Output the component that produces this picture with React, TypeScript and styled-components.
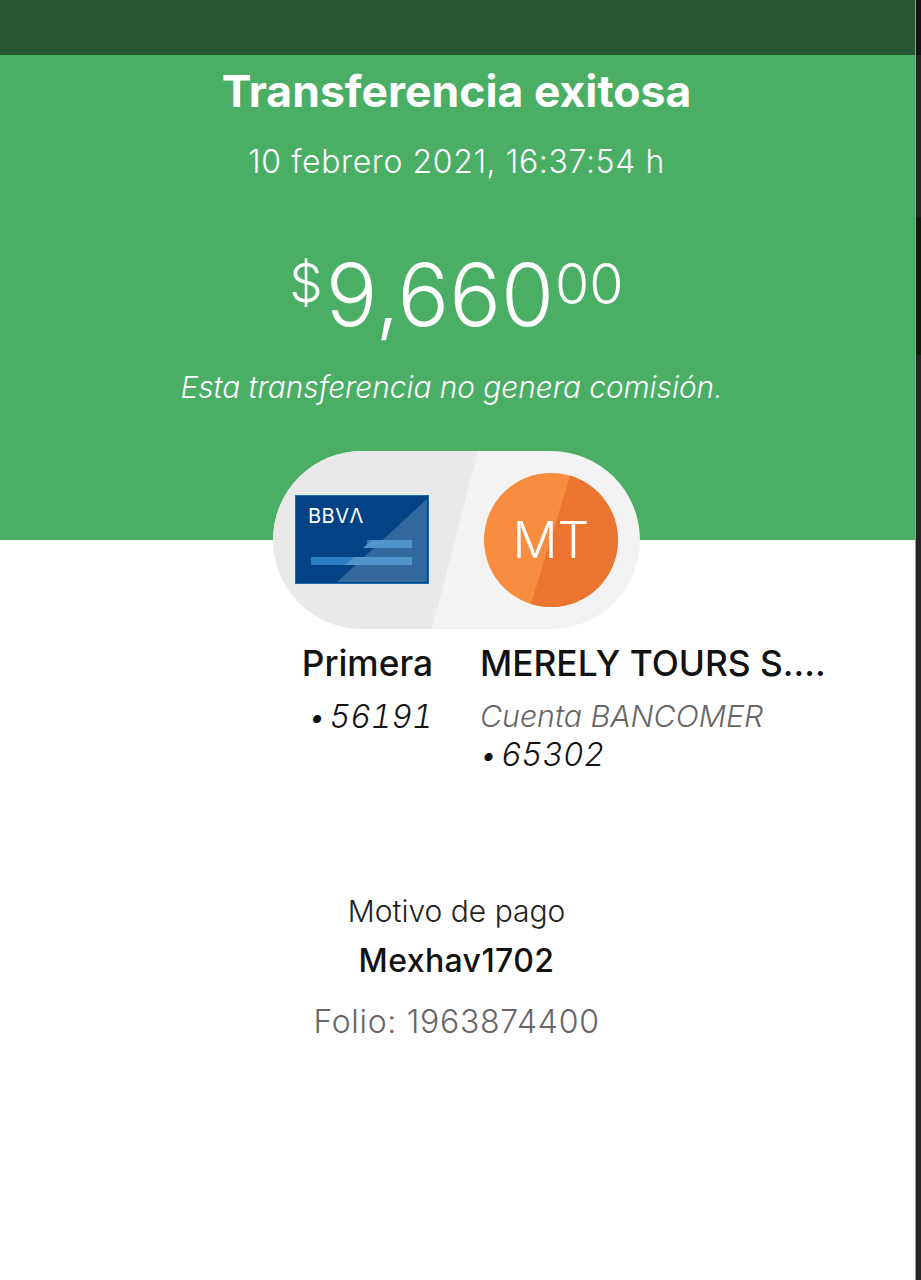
import React from "react";
import styled, { createGlobalStyle } from "styled-components";

const Global = createGlobalStyle`
  html, body { margin: 0; padding: 0; background: #fff; }
  body { font-family: Inter, "Liberation Sans", sans-serif; }
`;

const Screen = styled.div`
  display: flex;
  width: 921px;
  height: 1280px;
  overflow: hidden;
`;

const Main = styled.main`
  width: 915px;
  display: flex;
  flex-direction: column;
  background: #fff;
`;

const Strip = styled.div`
  width: 6px;
  display: flex;
  flex-direction: column;
  background: #252525;
  border-left: 1px solid #9a9a9a;
  box-sizing: border-box;
`;

const StripPart = styled.div<{ $h: number; $c: string }>`
  height: ${(p) => p.$h}px;
  background: ${(p) => p.$c};
`;

const StatusBar = styled.div`
  height: 55px;
  background: #285735;
  flex: none;
`;

const Hero = styled.section`
  height: 485px;
  flex: none;
  box-sizing: border-box;
  padding-right: 2px;
  background: #4aae65;
  color: #fff;
  display: flex;
  flex-direction: column;
  align-items: center;
`;

const Title = styled.h1`
  margin: 12px 0 0;
  font-size: 44.5px;
  line-height: 48px;
  font-weight: 700;
`;

const DateLine = styled.div`
  margin-top: 28px;
  font-size: 32px;
  line-height: 38px;
  font-weight: 300;
  letter-spacing: 0.6px;
`;

const Amount = styled.div`
  margin-top: 64px;
  display: flex;
  align-items: flex-start;
  height: 100px;
  font-weight: 300;
`;

const Currency = styled.span`
  font-size: 53px;
  line-height: 77px;
  margin-right: 3px;
`;

const Whole = styled.span`
  font-size: 86px;
  line-height: 100px;
`;

const Cents = styled.span`
  font-size: 55.5px;
  line-height: 78px;
  margin-left: 1px;
`;

const Note = styled.div`
  margin: 23px 10px 0 0;
  font-size: 29.8px;
  line-height: 38px;
  font-weight: 300;
  font-style: italic;
`;

const Pill = styled.div`
  position: relative;
  margin-top: 45px;
  width: 367px;
  height: 178px;
  flex: none;
  border-radius: 89px;
  overflow: hidden;
  background: #f3f3f3;
  display: flex;
  align-items: center;
  padding-left: 22px;
  box-sizing: border-box;
  &::before {
    content: "";
    position: absolute;
    inset: 0;
    background: #e9e9e9;
    clip-path: polygon(0 0, 205px 0, 159px 100%, 0 100%);
  }
`;

const Card = styled.svg`
  position: relative;
  display: block;
  width: 134px;
  height: 90px;
  flex: none;
`;

const Avatar = styled.div`
  position: relative;
  overflow: hidden;
  width: 134px;
  height: 134px;
  margin-left: 55px;
  flex: none;
  border-radius: 50%;
  background: #f98d3f;
  color: #fff;
  display: flex;
  align-items: center;
  justify-content: center;
  font-size: 50px;
  font-weight: 300;
  &::before {
    content: "";
    position: absolute;
    inset: 0;
    background: #ea7430;
    clip-path: polygon(87px 0, 100% 0, 100% 100%, 46px 100%);
  }
  & > span { position: relative; }
`;

const Accounts = styled.section`
  display: grid;
  grid-template-columns: 1fr 1fr;
  column-gap: 47px;
  margin-top: 102px;
  padding-right: 2px;
  color: #121212;
`;

const Account = styled.div<{ $right?: boolean }>`
  display: flex;
  flex-direction: column;
  align-items: ${(p) => (p.$right ? "flex-end" : "flex-start")};
  text-align: ${(p) => (p.$right ? "right" : "left")};
`;

const Name = styled.div`
  font-size: 35.3px;
  line-height: 44px;
  font-weight: 500;
  white-space: nowrap;
`;

const Bank = styled.div`
  margin-top: 11px;
  font-size: 30.3px;
  line-height: 38px;
  font-weight: 300;
  font-style: italic;
  color: #666;
`;

const Number = styled.div<{ $first?: boolean }>`
  margin-top: ${(p) => (p.$first ? "12px" : "1px")};
  font-size: 32px;
  line-height: 38px;
  font-weight: 300;
  font-style: italic;
  font-variant-numeric: tabular-nums;
`;

const Dot = styled.span`
  font-size: 30px;
  margin-right: 4px;
`;

const Details = styled.section`
  margin-top: 117px;
  padding-right: 2px;
  display: flex;
  flex-direction: column;
  align-items: center;
`;

const Label = styled.div`
  font-size: 30px;
  line-height: 40px;
  font-weight: 300;
  color: #222;
`;

const Value = styled.div`
  margin-top: 10px;
  font-size: 32px;
  line-height: 40px;
  font-weight: 500;
  letter-spacing: 0.4px;
  color: #121212;
`;

const Folio = styled.div`
  margin-top: 21px;
  font-size: 32px;
  line-height: 40px;
  font-weight: 300;
  letter-spacing: 0.7px;
  color: #666;
`;

export default function App() {
  return (
    <Screen>
      <Global />
      <Main>
        <StatusBar />
        <Hero>
          <Title>Transferencia exitosa</Title>
          <DateLine>10 febrero 2021, 16:37:54 h</DateLine>
          <Amount>
            <Currency>$</Currency>
            <Whole>9,660</Whole>
            <Cents>00</Cents>
          </Amount>
          <Note>Esta transferencia no genera comisión.</Note>
          <Pill>
            <Card viewBox="0 0 134 90">
              <rect x="0.5" y="0.5" width="133" height="88" fill="#024386" stroke="#1a6cae" />
              <polygon points="132,4 132,87 42,87" fill="#33689f" />
              <rect x="16" y="62" width="101" height="8" fill="#2a7cc2" />
              <rect x="72" y="45" width="45" height="8" fill="#2a7cc2" />
              <polygon points="77,45 117,45 117,53 68,53" fill="#4f94ca" />
              <polygon points="59,62 117,62 117,70 50,70" fill="#4f94ca" />
              <text x="13" y="28" fill="#fff" fontSize="20" fontWeight="400" fontFamily="Inter, sans-serif" letterSpacing="0.5">BBVΛ</text>
            </Card>
            <Avatar>
              <span>MT</span>
            </Avatar>
          </Pill>
        </Hero>
        <Accounts>
          <Account $right>
            <Name>Primera</Name>
            <Number $first><Dot>•</Dot>56191</Number>
          </Account>
          <Account>
            <Name>MERELY TOURS S....</Name>
            <Bank>Cuenta BANCOMER</Bank>
            <Number><Dot>•</Dot>65302</Number>
          </Account>
        </Accounts>
        <Details>
          <Label>Motivo de pago</Label>
          <Value>Mexhav1702</Value>
          <Folio>Folio: 1963874400</Folio>
        </Details>
      </Main>
      <Strip>
        <StripPart $h={55} $c="#141414" />
        <StripPart $h={162} $c="#252525" />
        <StripPart $h={138} $c="#0c1d0f" />
      </Strip>
    </Screen>
  );
}
